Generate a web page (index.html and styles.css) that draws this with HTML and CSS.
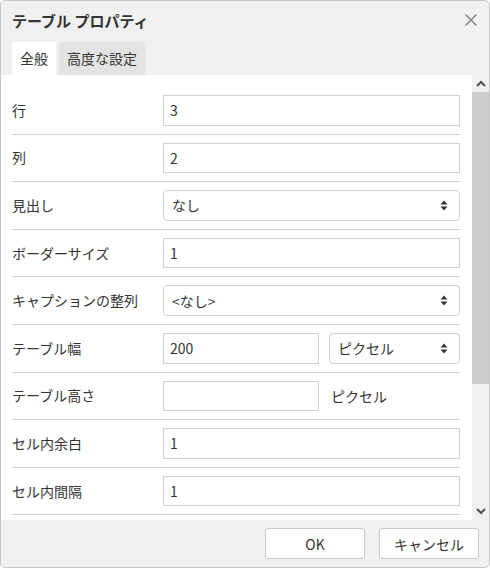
FILE: index.html
```html
<!DOCTYPE html>
<html lang="ja">
<head>
<meta charset="utf-8">
<link rel="stylesheet" href="styles.css">
</head>
<body>
<div class="dialog">
  <div class="head">
    <div class="title">テーブル プロパティ</div>
    <svg class="close" width="14" height="14" viewBox="0 0 14 14"><path d="M1.5 1.5 L12.5 12.5 M12.5 1.5 L1.5 12.5" stroke="#8a8a8a" stroke-width="1.6" fill="none"/></svg>
  </div>
  <div class="tabs">
    <div class="tab active">全般</div>
    <div class="tab">高度な設定</div>
  </div>
  <div class="body">
    <div class="content">
      <div class="row"><div class="label">行</div><div class="field"><div class="input">3</div></div></div>
      <div class="row"><div class="label">列</div><div class="field"><div class="input">2</div></div></div>
      <div class="row"><div class="label">見出し</div><div class="field"><div class="select"><span>なし</span><svg class="arr" width="8" height="11" viewBox="0 0 8 11"><path d="M4 0.5 L7.5 4.5 L0.5 4.5 Z M4 10.5 L7.5 6.5 L0.5 6.5 Z" fill="#333"/></svg></div></div></div>
      <div class="row"><div class="label">ボーダーサイズ</div><div class="field"><div class="input">1</div></div></div>
      <div class="row"><div class="label">キャプションの整列</div><div class="field"><div class="select"><span>&lt;なし&gt;</span><svg class="arr" width="8" height="11" viewBox="0 0 8 11"><path d="M4 0.5 L7.5 4.5 L0.5 4.5 Z M4 10.5 L7.5 6.5 L0.5 6.5 Z" fill="#333"/></svg></div></div></div>
      <div class="row"><div class="label">テーブル幅</div><div class="field split"><div class="input short">200</div><div class="select unit"><span>ピクセル</span><svg class="arr" width="8" height="11" viewBox="0 0 8 11"><path d="M4 0.5 L7.5 4.5 L0.5 4.5 Z M4 10.5 L7.5 6.5 L0.5 6.5 Z" fill="#333"/></svg></div></div></div>
      <div class="row"><div class="label">テーブル高さ</div><div class="field split"><div class="input short"></div><div class="unit-text">ピクセル</div></div></div>
      <div class="row"><div class="label">セル内余白</div><div class="field"><div class="input">1</div></div></div>
      <div class="row"><div class="label">セル内間隔</div><div class="field"><div class="input">1</div></div></div>
    </div>
    <div class="scrollbar">
      <div class="sb-btn"><svg width="10" height="7" viewBox="0 0 10 7"><path d="M1 6 L5 2 L9 6" stroke="#505050" stroke-width="2" fill="none"/></svg></div>
      <div class="sb-track"><div class="sb-thumb"></div></div>
      <div class="sb-btn"><svg width="10" height="7" viewBox="0 0 10 7"><path d="M1 1 L5 5 L9 1" stroke="#505050" stroke-width="2" fill="none"/></svg></div>
    </div>
  </div>
  <div class="foot">
    <div class="btn">OK</div>
    <div class="btn">キャンセル</div>
  </div>
</div>
</body>
</html>
```
FILE: styles.css
```css
html, body {
  margin: 0;
  padding: 0;
  background: #ffffff;
}
body {
  font-family: "Noto Sans CJK JP", "Noto Sans", sans-serif;
  font-size: 14px;
  color: #333333;
}
.dialog {
  box-sizing: border-box;
  width: 490px;
  height: 568px;
  border: 1px solid #c5c5c5;
  border-radius: 5px;
  background: #f0f0f0;
  display: flex;
  flex-direction: column;
  overflow: hidden;
}
.head {
  height: 41px;
  display: flex;
  align-items: center;
  justify-content: space-between;
  padding: 0 11px 0 11px;
  flex: none;
}
.title {
  font-size: 15px;
  font-weight: bold;
  color: #333;
  line-height: 20px;
  margin-top: -2px;
}
.close {
  margin-top: -4px;
}
.tabs {
  display: flex;
  gap: 3px;
  padding-left: 11px;
  height: 33px;
  flex: none;
}
.tab {
  padding: 0 8px;
  line-height: 33px;
  background: #e3e3e3;
  border-radius: 3px 3px 0 0;
  color: #333;
}
.tab.active {
  background: #ffffff;
}
.body {
  display: flex;
  height: 445px;
  flex: none;
}
.content {
  flex: 1;
  background: #ffffff;
  padding: 12px 12px 0 11px;
  overflow: hidden;
}
.row {
  display: flex;
  align-items: center;
  padding: 8px 0;
  border-bottom: 1px solid #d3d3d3;
  height: 30.6px;
}
.label {
  width: 151px;
  flex: none;
  margin-top: -1px;
}
.field {
  flex: 1;
  display: flex;
  height: 100%;
}
.field.split {
  gap: 10px;
  align-items: center;
}
.input {
  box-sizing: border-box;
  flex: 1;
  height: 100%;
  border: 1px solid #d0d0d0;
  padding: 0 6px;
  display: flex;
  align-items: center;
}
.input.short {
  flex: none;
  width: 156px;
}
.select {
  box-sizing: border-box;
  flex: 1;
  height: 100%;
  border: 1px solid #d0d0d0;
  border-radius: 4px;
  padding: 0 11px 0 8px;
  display: flex;
  align-items: center;
  justify-content: space-between;
}
.unit-text {
  padding-left: 2px;
}
.scrollbar {
  width: 17px;
  flex: none;
  background: #f0f0f0;
  display: flex;
  flex-direction: column;
}
.sb-btn {
  height: 17px;
  display: flex;
  align-items: center;
  justify-content: center;
  flex: none;
}
.sb-track {
  flex: 1;
  display: flex;
  flex-direction: column;
}
.sb-thumb {
  height: 292px;
  background: #cdcdcd;
}
.foot {
  flex: 1;
  display: flex;
  justify-content: flex-end;
  align-items: center;
  gap: 14px;
  padding-right: 10px;
}
.btn {
  box-sizing: border-box;
  width: 100px;
  height: 31px;
  background: #ffffff;
  border: 1px solid #c8c8c8;
  border-radius: 3px;
  display: flex;
  align-items: center;
  justify-content: center;
  color: #333;
}
```
